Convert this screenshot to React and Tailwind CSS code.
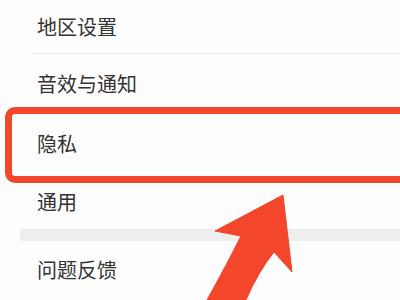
import React from 'react';

const rows = [
    { label: '地区设置', h: 'h-[53px]' },
    { label: '音效与通知', h: 'h-[60px]' },
    { label: '隐私', h: 'h-[60px]' },
    { label: '通用', h: 'h-[55px]' },
];

const App = () => {
    return (
        <div className="relative w-[400px] h-[300px] overflow-hidden bg-[#fdfdfd]" style={{ fontFamily: '"Noto Sans CJK SC", "Noto Sans", sans-serif' }}>
            <div className="flex flex-col">
                {rows.map((row, i) => (
                    <div key={row.label} className="flex flex-col">
                        <div className={`${row.h} flex items-center pl-[37px] text-[20px] text-[#333333]`}>{row.label}</div>
                        {i === 0 && <div className="ml-[32px] h-px bg-[#ececec]" />}
                    </div>
                ))}
                <div className="ml-[20px] h-[12px] bg-[#eeeeee]" />
                <div className="h-[58px] flex items-center pl-[37px] text-[20px] text-[#333333]">问题反馈</div>
            </div>

            {/* annotation box */}
            <div className="absolute left-[5px] top-[107px] w-[420px] h-[76px] border-[7px] border-[#f3462c] rounded-[10px]" />

            {/* annotation arrow */}
            <svg className="absolute left-0 top-0" width="400" height="300" viewBox="0 0 400 300">
                <path
                    d="M283 195 L215 231 L241 236 Q226 266 207 300 L246 300 Q258 272 274 252 L292 272 Z"
                    fill="#f4462b"
                    stroke="#f4462b"
                    strokeWidth="1"
                    strokeLinejoin="round"
                />
            </svg>
        </div>
    );
};

export default App;
